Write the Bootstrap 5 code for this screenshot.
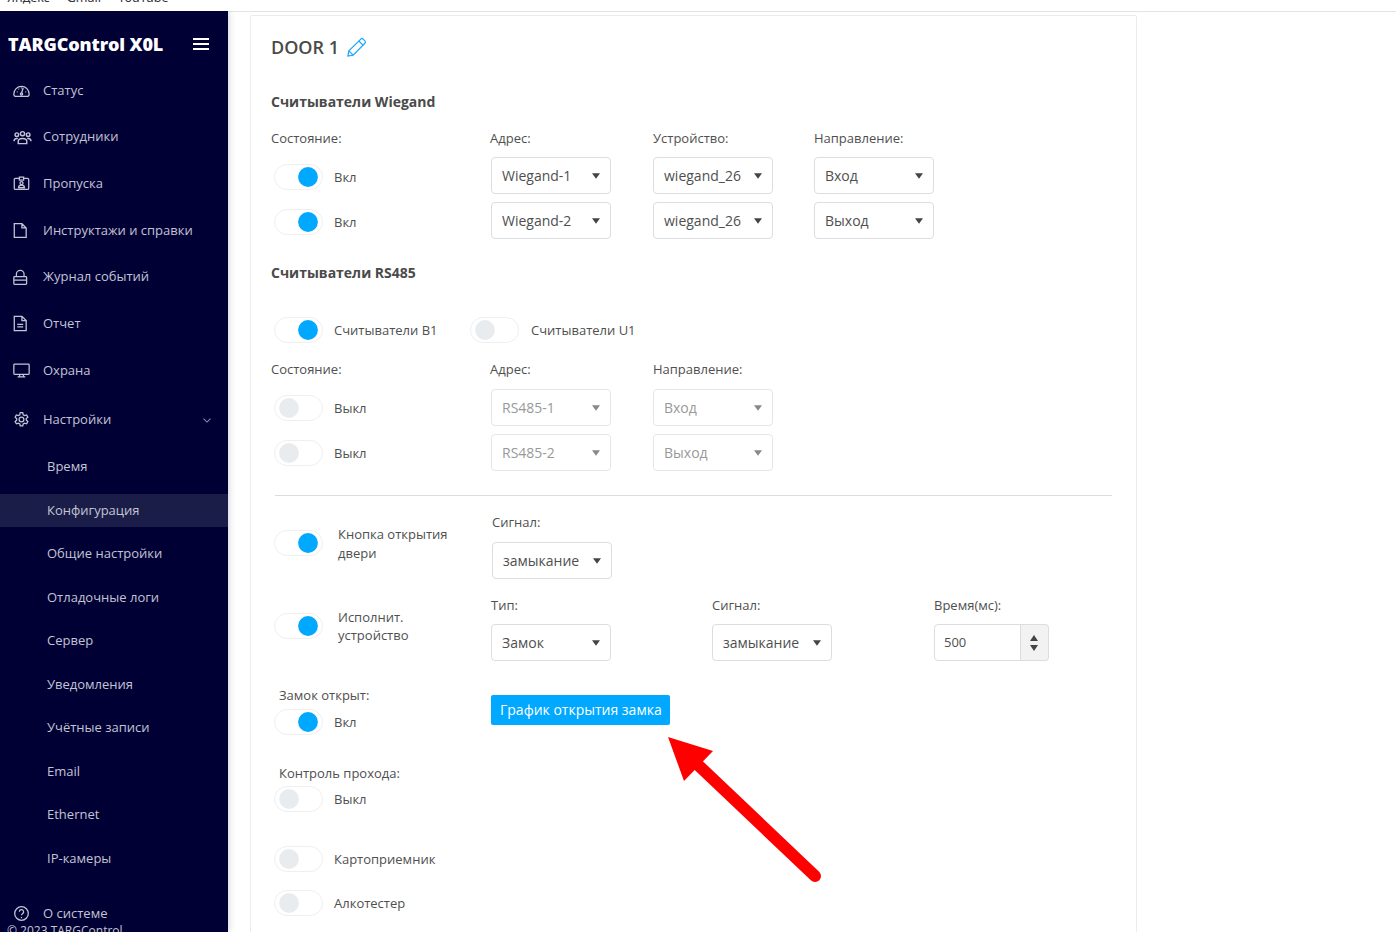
<!doctype html>
<html lang="ru"><head><meta charset="utf-8"><title>TARGControl X0L</title>
<link href="https://cdn.jsdelivr.net/npm/bootstrap@5.3.0/dist/css/bootstrap.min.css" rel="stylesheet">
<style>
html,body{height:932px;overflow:hidden;background:#fff}
body{font-family:"Open Sans","Noto Sans",sans-serif;font-size:13px;color:#4f4f4f}
.bm-bar{height:11px;border-bottom:1px solid #e4e4e4;box-sizing:content-box;overflow:hidden;font-family:"Noto Sans",sans-serif;font-size:12.5px;line-height:14px;color:#333;padding-left:7px;gap:17px}
.bm-bar span{margin-top:-9px}
.shell{height:921px;position:relative;overflow:hidden;margin-top:-1px}
.side{width:228px;flex:none;background:#000035;color:#c3c4d4;box-shadow:0 0 7px rgba(60,70,100,.3);z-index:2;font-size:13px}
.side>div{flex:none}
.brand{padding:10px 19px 0 8px;box-sizing:content-box;height:46.15px;width:201px}
.brand b{font-size:18px;font-weight:800;color:#fff;letter-spacing:-.13px}
.burger{width:16px;height:12px;border-top:2px solid #fff;border-bottom:2px solid #fff;position:relative}
.burger::after{content:"";position:absolute;left:0;right:0;top:3px;height:2px;background:#fff}
.mi{height:46.7px;padding-left:13px;gap:13px}
.mi svg{width:17px;height:17px;flex:none;fill:none;stroke:#c3c4d4;stroke-width:1.5}
.mi svg.grp{width:19px;margin-right:-2px}
.mi svg.chev{width:14px;height:14px;margin-right:14px;stroke:#8a8ca8}
.si{height:33px;margin:5.25px 0;padding-left:47px}
.si.on{background:#1a1d47}
.mi-cfg{height:51.3px}
.mi-about{margin-top:10.2px;height:46px}
.copy{position:absolute;left:7px;top:911px;white-space:nowrap;color:#c3c4d4;z-index:3;font-size:12px}
.work{padding:4px 0 0 22px}
.panel{width:887px;height:960px;padding:0 20px;border:1px solid #ececec;border-radius:2px}
.ttl{height:63px;gap:7px}
.ttl span{font-size:18px;font-weight:600;color:#4a4a4a}
.hd{font-size:14px;font-weight:700;color:#4a4a4a;line-height:20px;margin:0}
.h-wg{margin-top:13px}
.lb{line-height:18px}
.rw{display:flex;align-items:flex-start}
.c1{width:219px;flex:none}.c2{width:162px;flex:none}.c3{width:162px;flex:none;padding-left:1px}.c4{width:120px;flex:none}
.c2 .sel{margin-left:1px}
.sw{display:flex;align-items:center;padding-left:3px;min-height:0;margin:0;gap:11px}
.sw .form-check-input{width:49px;height:26px;margin:0;float:none;border:1px solid #efefef;border-radius:13px;background-color:#fff;background-size:24px 24px;box-shadow:none;background-repeat:no-repeat;
 background-image:url("data:image/svg+xml,%3csvg xmlns='http://www.w3.org/2000/svg' viewBox='-4 -4 8 8'%3e%3ccircle r='3.3' fill='%23e9ecef'/%3e%3c/svg%3e");background-position:left 2px center;opacity:1}
.sw .form-check-input:checked{background-color:#fff;border-color:#efefef;background-image:url("data:image/svg+xml,%3csvg xmlns='http://www.w3.org/2000/svg' viewBox='-4 -4 8 8'%3e%3ccircle r='3.3' fill='%2300a8ff'/%3e%3c/svg%3e");background-position:right 2px center}
.sw label{opacity:1;margin:0;line-height:18px}
.u1 label{margin-left:1px}
.sel{width:120px;height:37px;padding:0 24px 0 10px;font-size:14px;color:#4f4f4f;border:1px solid #dcdde1;border-radius:4px;box-shadow:none;flex:none;
 background-size:8px 6px;background-position:right 10px center;background-image:url("data:image/svg+xml,%3csvg xmlns='http://www.w3.org/2000/svg' viewBox='0 0 9 6'%3e%3cpath d='M0 0h9L4.500 6z' fill='%23444'/%3e%3c/svg%3e")}
.sel:disabled{background-color:#fff;color:#999;border-color:#e6e6e6;background-image:url("data:image/svg+xml,%3csvg xmlns='http://www.w3.org/2000/svg' viewBox='0 0 9 6'%3e%3cpath d='M0 0h9L4.500 6z' fill='%23888'/%3e%3c/svg%3e")}
.r-lb1{margin-top:17px}.r-w1{margin-top:10px}.r-w2{margin-top:8px}
.r-w1 .sw,.r-w2 .sw{margin-top:2px}
.h-rs{margin-top:24px}
.r-tg{margin-top:34px;gap:0}.r-lb2{margin-top:17px}.r-a1{margin-top:11px}.r-a2{margin-top:8px}
.w-b1{width:196px;flex:none}
.rule{margin:24px 0 0 4px;width:837px;border-top:1px solid #dcdcdc;opacity:1}
.r-btn{margin-top:17px;height:65px}
.r-act{margin-top:18px;height:66px}
.sw-t{padding-top:12px}
.sw-t label{width:125px;margin-left:4px}
.sw-t.tall{padding-top:10px}
.sw-t.tall label{line-height:19px;padding-top:2px}
.sig{margin-left:2px}
.sig .sel{margin:11px 0 0}
.act-c{flex:none;padding-left:1px}
.act-c .sel,.act-c .spn{margin-top:10px}
.ty{width:221px}.sg{width:222px}
.spn{width:115px;height:37px;flex-wrap:nowrap}
.spn .form-control{height:37px;font-size:13px;padding:0 0 2px 9px;color:#4f4f4f;border-color:#dcdde1;border-radius:4px 0 0 4px;box-shadow:none}
.spn-b{width:29px;flex:none;background:#f2f2f2;border:1px solid #dcdde1;border-left:0;border-radius:0 4px 4px 0;gap:4px}
.spn-b i{display:block;border-left:4.500px solid transparent;border-right:4.500px solid transparent}
.spn-b .up{border-bottom:6px solid #444}.spn-b .dn{border-top:6px solid #444}
.r-lock{margin-top:24px}
.pad8{padding-left:8px}
.gap5{margin-top:5px}.gap4{margin-top:4px}
.blue{background:#00a8ff;border:0;border-radius:2px;color:#fff;font-size:14px;height:30px;padding:0 9px;margin:9px 0 0 1px;width:179px;white-space:nowrap;line-height:30px}
.blue:hover{background:#00a8ff;color:#fff}
.r-pass{margin-top:29px}
.r-card{margin-top:34px}.r-alc{margin-top:18px}
.arrow{position:absolute;left:660px;top:719px;width:170px;height:170px;z-index:5}
</style></head>
<body>
<div class="bm-bar d-flex"><span>Яндекс</span><span>Gmail</span><span>YouTube</span></div>
<div class="shell d-flex">
<nav class="side d-flex flex-column">
 <div class="brand d-flex align-items-center justify-content-between"><b>TARGControl X0L</b><span class="burger"></span></div>
 <div class="mi d-flex align-items-center"><svg viewBox="0 0 20 20"><path d="M3.500 17h13a2.500 2.500 0 0 0 2.500-2.800 9 9 0 0 0-18 0A2.500 2.500 0 0 0 3.500 17z"/><path d="M10 13l2-6M4.500 11.500h1M14.500 11.500h1M6.500 8l.7.7M10 6.500v1"/><circle cx="10" cy="14" r="1.300"/></svg><span>Статус</span></div>
 <div class="mi d-flex align-items-center"><svg class="grp" viewBox="0 0 20 18"><circle cx="4" cy="6" r="1.900"/><circle cx="10" cy="5" r="2.200"/><circle cx="16" cy="6" r="1.900"/><path d="M1 13c0-2 1-3 3-3h1M19 13c0-2-1-3-3-3h-1M5.500 15.500V13c0-2 1.500-3 4.500-3s4.500 1 4.500 3v2.500z"/></svg><span>Сотрудники</span></div>
 <div class="mi d-flex align-items-center"><svg viewBox="0 0 20 20"><path d="M7 4H3a1.500 1.500 0 0 0-1.500 1.500v10A1.500 1.500 0 0 0 3 17h14a1.500 1.500 0 0 0 1.500-1.500v-10A1.500 1.500 0 0 0 17 4h-4"/><rect x="7.500" y="2.500" width="5" height="3.500"/><circle cx="10" cy="9.500" r="1.800"/><path d="M6.500 15c0-2 1.500-3 3.500-3s3.500 1 3.500 3z"/></svg><span>Пропуска</span></div>
 <div class="mi d-flex align-items-center"><svg viewBox="0 0 20 20"><path d="M1.500 2h9l5 5v11h-14zM10.500 2v5h5"/></svg><span>Инструктажи и справки</span></div>
 <div class="mi d-flex align-items-center"><svg viewBox="0 0 20 20"><rect x="1" y="9" width="15" height="9" rx="1"/><path d="M4 9V6a4.500 4.500 0 0 1 9 0v3M1 13h15"/></svg><span>Журнал событий</span></div>
 <div class="mi d-flex align-items-center"><svg viewBox="0 0 20 20"><path d="M1.500 1.500h9l5 5v12h-14zM10.500 1.500v5h5M5 11h7M5 14h7"/></svg><span>Отчет</span></div>
 <div class="mi d-flex align-items-center"><svg viewBox="0 0 20 20"><rect x="1" y="2.500" width="18" height="12" rx="1"/><path d="M8 14.500l-.5 3M12 14.500l.5 3M5.500 17.500h9"/></svg><span>Охрана</span></div>
 <div class="mi mi-cfg d-flex align-items-center"><svg viewBox="0 0 20 20"><path d="M8.500 2h3l.5 2.500 1.600.9 2.400-.8 1.500 2.600-1.900 1.700v1.800l1.900 1.700-1.500 2.600-2.400-.8-1.600.9-.5 2.500h-3l-.5-2.500-1.600-.9-2.400.8-1.500-2.600 1.900-1.700V9.100L2.500 7.200 4 4.600l2.400.8L8 4.500z"/><circle cx="10" cy="10" r="2.800"/></svg><span>Настройки</span><svg class="chev ms-auto" viewBox="0 0 20 20"><path d="M5 8l5 5 5-5"/></svg></div>
 <div class="si d-flex align-items-center"><span>Время</span></div>
 <div class="si on d-flex align-items-center"><span>Конфигурация</span></div>
 <div class="si d-flex align-items-center"><span>Общие настройки</span></div>
 <div class="si d-flex align-items-center"><span>Отладочные логи</span></div>
 <div class="si d-flex align-items-center"><span>Сервер</span></div>
 <div class="si d-flex align-items-center"><span>Уведомления</span></div>
 <div class="si d-flex align-items-center"><span>Учётные записи</span></div>
 <div class="si d-flex align-items-center"><span>Email</span></div>
 <div class="si d-flex align-items-center"><span>Ethernet</span></div>
 <div class="si d-flex align-items-center"><span>IP-камеры</span></div>
 <div class="mi mi-about d-flex align-items-center"><svg viewBox="0 0 20 20"><circle cx="10" cy="10" r="8"/><path d="M7.500 8a2.500 2.500 0 1 1 3.700 2.200c-.8.500-1.200 1-1.200 2M10 14v1.500"/></svg><span>О системе</span></div>
 <div class="copy">© 2023 TARGControl</div>
</nav>
<main class="work flex-grow-1">
 <section class="panel">
  <div class="ttl d-flex align-items-center"><span>DOOR 1</span><svg width="21" height="21" viewBox="0 0 22 22" fill="none" stroke="#1ea7fd" stroke-width="1.300"><path d="M2 20l1-5.500L15.500 2.200a1.800 1.800 0 0 1 2.500 0l1.800 1.800a1.800 1.800 0 0 1 0 2.500L7.500 19z"/><path d="M13.500 4.200l4.300 4.300M3 14.500L7.500 19"/></svg></div>
  <h6 class="hd h-wg">Считыватели Wiegand</h6>
  <div class="rw lb r-lb1"><div class="c1 lb">Состояние:</div><div class="c2">Адрес:</div><div class="c3">Устройство:</div><div class="c4">Направление:</div></div>
  <div class="rw r-w1 align-items-center"><div class="c1"><div class="form-check form-switch sw"><input class="form-check-input" type="checkbox" role="switch" checked><label class="form-check-label">Вкл</label></div></div><div class="c2"><select class="form-select sel"><option>Wiegand-1</option></select></div><div class="c3"><select class="form-select sel"><option>wiegand_26</option></select></div><div class="c4"><select class="form-select sel"><option>Вход</option></select></div></div>
  <div class="rw r-w2 align-items-center"><div class="c1"><div class="form-check form-switch sw"><input class="form-check-input" type="checkbox" role="switch" checked><label class="form-check-label">Вкл</label></div></div><div class="c2"><select class="form-select sel"><option>Wiegand-2</option></select></div><div class="c3"><select class="form-select sel"><option>wiegand_26</option></select></div><div class="c4"><select class="form-select sel"><option>Выход</option></select></div></div>
  <h6 class="hd h-rs">Считыватели RS485</h6>
  <div class="rw r-tg"><div class="w-b1"><div class="form-check form-switch sw"><input class="form-check-input" type="checkbox" role="switch" checked><label class="form-check-label">Считыватели B1</label></div></div><div><div class="form-check form-switch sw u1"><input class="form-check-input" type="checkbox" role="switch"><label class="form-check-label">Считыватели U1</label></div></div></div>
  <div class="rw lb r-lb2"><div class="c1">Состояние:</div><div class="c2">Адрес:</div><div class="c3">Направление:</div></div>
  <div class="rw r-a1 align-items-center"><div class="c1"><div class="form-check form-switch sw"><input class="form-check-input" type="checkbox" role="switch"><label class="form-check-label">Выкл</label></div></div><div class="c2"><select class="form-select sel" disabled><option>RS485-1</option></select></div><div class="c3"><select class="form-select sel" disabled><option>Вход</option></select></div></div>
  <div class="rw r-a2 align-items-center"><div class="c1"><div class="form-check form-switch sw"><input class="form-check-input" type="checkbox" role="switch"><label class="form-check-label">Выкл</label></div></div><div class="c2"><select class="form-select sel" disabled><option>RS485-2</option></select></div><div class="c3"><select class="form-select sel" disabled><option>Выход</option></select></div></div>
  <hr class="rule">
  <div class="rw r-btn"><div class="c1"><div class="form-check form-switch sw sw-t tall"><input class="form-check-input" type="checkbox" role="switch" checked><label class="form-check-label">Кнопка открытия двери</label></div></div><div class="sig lb"><div>Сигнал:</div><select class="form-select sel"><option>замыкание</option></select></div></div>
  <div class="rw r-act"><div class="c1"><div class="form-check form-switch sw sw-t"><input class="form-check-input" type="checkbox" role="switch" checked><label class="form-check-label">Исполнит. устройство</label></div></div>
   <div class="act-c ty lb"><div>Тип:</div><select class="form-select sel"><option>Замок</option></select></div>
   <div class="act-c sg lb"><div>Сигнал:</div><select class="form-select sel"><option>замыкание</option></select></div>
   <div class="act-c lb"><div>Время(мс):</div><div class="input-group spn"><input class="form-control" value="500"><div class="spn-b d-flex flex-column align-items-center justify-content-center"><i class="up"></i><i class="dn"></i></div></div></div></div>
  <div class="rw r-lock"><div class="c1"><div class="lb pad8">Замок открыт:</div><div class="form-check form-switch sw gap5"><input class="form-check-input" type="checkbox" role="switch" checked><label class="form-check-label">Вкл</label></div></div><button class="btn blue" type="button">График открытия замка</button></div>
  <div class="r-pass"><div class="lb pad8">Контроль прохода:</div><div class="form-check form-switch sw gap4"><input class="form-check-input" type="checkbox" role="switch"><label class="form-check-label">Выкл</label></div></div>
  <div class="form-check form-switch sw r-card"><input class="form-check-input" type="checkbox" role="switch"><label class="form-check-label">Картоприемник</label></div>
  <div class="form-check form-switch sw r-alc"><input class="form-check-input" type="checkbox" role="switch"><label class="form-check-label">Алкотестер</label></div>
 </section>
</main>
<svg class="arrow" viewBox="660 730 170 170" aria-hidden="true"><path d="M668 737l45 14-29 30z" fill="#f00"/><path d="M697 764l118 112" stroke="#f00" stroke-width="12" stroke-linecap="round"/></svg>
</div>
<script src="https://cdn.jsdelivr.net/npm/bootstrap@5.3.0/dist/js/bootstrap.bundle.min.js"></script>
</body></html>
